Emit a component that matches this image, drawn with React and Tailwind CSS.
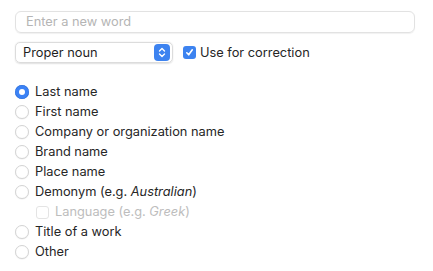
import React from "react";

const font = { fontFamily: 'Inter, "Liberation Sans", Arial, sans-serif' };

function Radio({ checked }) {
  if (checked) {
    return (
      <span className="w-[14px] h-[14px] rounded-full bg-[#3b82f6] flex items-center justify-center shrink-0 shadow-[inset_0_0_0_0.5px_#2f6fd6]">
        <span className="w-[6px] h-[6px] rounded-full bg-white" />
      </span>
    );
  }
  return (
    <span className="w-[14px] h-[14px] rounded-full bg-white border border-[#d4d4d4] shadow-[0_0.5px_1px_rgba(0,0,0,0.08)] shrink-0" />
  );
}

function Row({ checked, children }) {
  return (
    <div className="h-[20px] flex items-center gap-[6px] pl-[15px]">
      <Radio checked={checked} />
      <span className="text-[12.8px] text-[#262626] leading-none">{children}</span>
    </div>
  );
}

export default function App() {
  return (
    <div className="w-[433px] h-[271px] bg-white relative overflow-hidden" style={font}>
      <div className="pt-[11px] px-[15px] pr-[18px]">
        <div className="h-[22px] rounded-[6px] border border-[#e2e2e2] shadow-[0_0.5px_1px_rgba(0,0,0,0.06)] flex items-center px-[10px] text-[12.8px] text-[#b5b5b5]">
          Enter a new word
        </div>
        <div className="flex items-center mt-[9px] gap-[10px]">
          <div className="w-[158px] h-[21px] rounded-[5px] border border-[#dcdcdc] shadow-[0_0.5px_1.5px_rgba(0,0,0,0.12)] flex items-center pl-[7px] pr-[2px] justify-between text-[12.8px] text-[#1f1f1f]">
            <span>Proper noun</span>
            <span className="w-[16px] h-[17px] rounded-[4px] bg-[#3d83f0] flex items-center justify-center">
              <svg width="8" height="11" viewBox="0 0 8 11" fill="none" stroke="white" strokeWidth="1.4" strokeLinecap="round" strokeLinejoin="round">
                <path d="M1.5 4 L4 1.5 L6.5 4" />
                <path d="M1.5 7 L4 9.5 L6.5 7" />
              </svg>
            </span>
          </div>
          <div className="flex items-center gap-[4px]">
            <span className="w-[13px] h-[13px] rounded-[3px] bg-[#3d83f0] flex items-center justify-center">
              <svg width="9" height="9" viewBox="0 0 9 9" fill="none" stroke="white" strokeWidth="1.6" strokeLinecap="round" strokeLinejoin="round">
                <path d="M1.8 4.8 L3.7 6.8 L7.3 1.8" />
              </svg>
            </span>
            <span className="text-[12.8px] text-[#262626]">Use for correction</span>
          </div>
        </div>
      </div>
      <div className="mt-[19px] flex flex-col">
        <Row checked>Last name</Row>
        <Row>First name</Row>
        <Row>Company or organization name</Row>
        <Row>Brand name</Row>
        <Row>Place name</Row>
        <Row>Demonym (e.g. <i>Australian</i>)</Row>
        <div className="h-[20px] flex items-center gap-[6px] pl-[36px]">
          <span className="w-[13px] h-[13px] rounded-[3px] border border-[#e4e4e4] bg-white shrink-0" />
          <span className="text-[12.8px] text-[#bdbdbd] leading-none">Language (e.g. <i>Greek</i>)</span>
        </div>
        <Row>Title of a work</Row>
        <Row>Other</Row>
      </div>
    </div>
  );
}
